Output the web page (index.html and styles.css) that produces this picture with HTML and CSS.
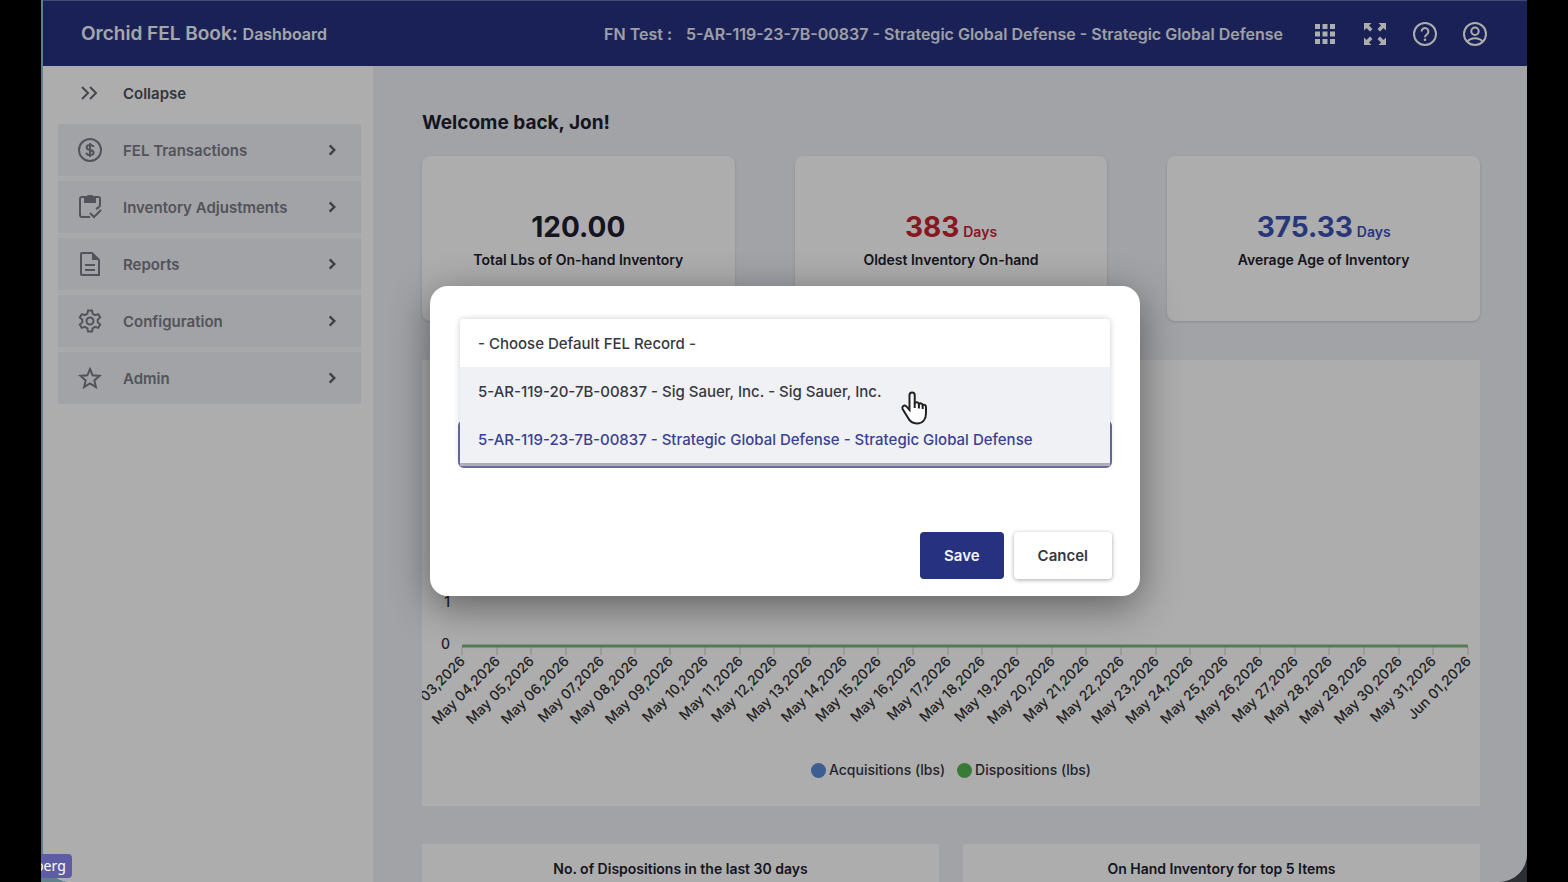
FILE: index.html
```html
<!DOCTYPE html>
<html lang="en">
<head>
    <meta charset="UTF-8">
    <meta name="viewport" content="width=device-width, initial-scale=1.0">
    <title>Orchid FEL Book: Dashboard</title>
    <link rel="stylesheet" href="styles.css">
</head>
<body>

    <div class="desktop">
        <div class="app">
            <header class="topbar">
                <h1 class="brand">Orchid FEL Book: <span>Dashboard</span></h1>
                <div class="account">
                    <span>FN Test :</span>
                    <span>5-AR-119-23-7B-00837 - Strategic Global Defense - Strategic Global Defense</span>
                </div>
                <button class="icon-button" aria-label="Apps">
                    <svg viewBox="0 0 24 24"><path d="M2 2h5v5H2zM9.500 2h5v5h-5zM17 2h5v5h-5zM2 9.500h5v5H2zM9.500 9.500h5v5h-5zM17 9.500h5v5h-5zM2 17h5v5H2zM9.500 17h5v5h-5zM17 17h5v5h-5z"/></svg>
                </button>
                <button class="icon-button" aria-label="Full screen">
                    <svg viewBox="0 0 24 24"><path d="M1 1h7.500L6 3.500l3.500 3.500L7 9.500 3.500 6 1 8.500zM23 1v7.500L20.500 6 17 9.500 14.500 7 18 3.500 15.500 1zM1 23v-7.500L3.500 18 7 14.500 9.500 17 6 20.500 8.500 23zM23 23h-7.500l2.500-2.500-3.500-3.500 2.500-2.500 3.500 3.500 2.500-2.500z"/></svg>
                </button>
                <button class="icon-button" aria-label="Help">
                    <svg viewBox="0 0 24 24"><g fill="none" stroke="currentColor" stroke-width="2"><circle cx="12" cy="12" r="11"/><path d="M8.600 9.500a3.400 3.400 0 1 1 5.700 2.500c-1.300 1.100-2.300 1.600-2.300 3.300"/></g><circle cx="12" cy="17.800" r="1.300"/></svg>
                </button>
                <button class="icon-button" aria-label="Account">
                    <svg viewBox="0 0 24 24"><g fill="none" stroke="currentColor" stroke-width="2"><circle cx="12" cy="12" r="11"/><circle cx="12" cy="9.300" r="3.700"/><path d="M4.500 19.500c1.800-2.200 4.400-3.200 7.500-3.200s5.700 1 7.500 3.200"/></g></svg>
                </button>
            </header>

            <div class="layout">
                <nav class="sidebar">
                    <button class="collapse">
                        <svg class="nav-icon" viewBox="0 0 24 24"><path d="M4 6l6 6-6 6M12 6l6 6-6 6"/></svg>
                        Collapse
                    </button>
                    <div class="nav-list">
                        <a class="nav-item" href="#">
                            <svg class="nav-icon" viewBox="0 0 24 24"><circle cx="12" cy="12" r="11"/><path d="M12 5v14M15.500 9c-.3-1.300-1.600-2-3.500-2s-3.400.8-3.400 2.400c0 3.600 7 1.500 7 5.100 0 1.600-1.500 2.500-3.600 2.500s-3.500-.8-3.800-2.300"/></svg>
                            <span>FEL Transactions</span>
                            <svg class="chevron" viewBox="0 0 12 12"><path d="M4 2l4 4-4 4"/></svg>
                        </a>
                        <a class="nav-item" href="#">
                            <svg class="nav-icon" viewBox="0 0 24 24"><path d="M12 22H4a2 2 0 0 1-2-2V4a2 2 0 0 1 2-2h16a2 2 0 0 1 2 2v6M22 10c0 2-2 3-4 4M12 18l4 4 7-7"/><path class="solid" d="M6 2h3a3 3 0 0 1 6 0h3v6H6z"/></svg>
                            <span>Inventory Adjustments</span>
                            <svg class="chevron" viewBox="0 0 12 12"><path d="M4 2l4 4-4 4"/></svg>
                        </a>
                        <a class="nav-item" href="#">
                            <svg class="nav-icon" viewBox="0 0 24 24"><path d="M4 1h10l7 7v15H4a1 1 0 0 1-1-1V2a1 1 0 0 1 1-1zM7 13h10M7 18h10"/><path class="solid" d="M14 1v7h7z"/></svg>
                            <span>Reports</span>
                            <svg class="chevron" viewBox="0 0 12 12"><path d="M4 2l4 4-4 4"/></svg>
                        </a>
                        <a class="nav-item" href="#">
                            <svg class="nav-icon" viewBox="0 0 24 24"><circle cx="12" cy="12" r="3.500"/><path d="M10 1.500h4l.6 3.200 2.500 1.500 3.100-1.100 2 3.400-2.500 2.100v2.800l2.500 2.100-2 3.400-3.100-1.100-2.500 1.500-.6 3.200h-4l-.6-3.200-2.500-1.500-3.100 1.100-2-3.400 2.500-2.100v-2.800L1.800 8.500l2-3.400 3.100 1.100 2.500-1.500z"/></svg>
                            <span>Configuration</span>
                            <svg class="chevron" viewBox="0 0 12 12"><path d="M4 2l4 4-4 4"/></svg>
                        </a>
                        <a class="nav-item" href="#">
                            <svg class="nav-icon" viewBox="0 0 24 24"><path d="M12 3l2.600 6.300 6.900.6-5.200 4.500 1.600 6.700-5.900-3.600-5.900 3.600 1.600-6.700L2.500 9.900l6.900-.6z"/></svg>
                            <span>Admin</span>
                            <svg class="chevron" viewBox="0 0 12 12"><path d="M4 2l4 4-4 4"/></svg>
                        </a>
                    </div>
                </nav>

                <main class="content">
                    <h2 class="welcome">Welcome back, Jon!</h2>

                    <section class="stats">
                        <div class="card stat">
                            <p class="stat-value">120.00</p>
                            <p class="stat-label">Total Lbs of On-hand Inventory</p>
                        </div>
                        <div class="card stat">
                            <p class="stat-value red">383<small>Days</small></p>
                            <p class="stat-label">Oldest Inventory On-hand</p>
                        </div>
                        <div class="card stat">
                            <p class="stat-value blue">375.33<small>Days</small></p>
                            <p class="stat-label">Average Age of Inventory</p>
                        </div>
                    </section>

                    <section class="chart">
                        <svg class="plot" viewBox="0 0 1058 380">
                            <text x="28" y="247" text-anchor="end">1</text>
                            <text x="28" y="289" text-anchor="end">0</text>
                            <g id="axis"></g>
                            <path class="series" d="M40 286H1046"/>
                        </svg>
                        <div class="legend">
                            <span class="key"><i class="dot dot-blue"></i>Acquisitions (lbs)</span>
                            <span class="key"><i class="dot dot-green"></i>Dispositions (lbs)</span>
                        </div>
                    </section>

                    <section class="panels">
                        <div class="panel">No. of Dispositions in the last 30 days</div>
                        <div class="panel">On Hand Inventory for top 5 Items</div>
                    </section>
                </main>
            </div>

            <div class="overlay">
                <div class="dialog" role="dialog" aria-modal="true" aria-label="Default FEL record">
                    <div class="field">
                        <select class="record" aria-label="Default FEL record">
                            <option>5-AR-119-23-7B-00837 - Strategic Global Defense - Strategic Global Defense</option>
                        </select>
                        <div class="menu">
                            <button class="option">- Choose Default FEL Record -</button>
                            <button class="option hovered">5-AR-119-20-7B-00837 - Sig Sauer, Inc. - Sig Sauer, Inc.</button>
                            <button class="option selected">5-AR-119-23-7B-00837 - Strategic Global Defense - Strategic Global Defense</button>
                            <svg class="pointer" viewBox="0 0 28 36"><path d="M9.500 20V5a2.600 2.600 0 0 1 5.200 0v8.500c.6-2 4-1.800 4.200.8.900-1.600 3.600-1 3.800 1 1.200-1.200 3.300-.4 3.300 1.700v6c0 6.500-3.500 10.500-9 10.500-5 0-7.500-2.500-9.500-6.500L2.600 19c-1-2.400 1.600-4.600 3.500-2.800z"/><path d="M14.700 13v5M18.900 14.500v4M22.700 15.500v3.500"/></svg>
                        </div>
                    </div>
                    <div class="actions">
                        <button class="btn btn-save">Save</button>
                        <button class="btn">Cancel</button>
                    </div>
                </div>
            </div>
        </div>
        <div class="name-tag"><span>berg</span></div>
    </div>

    <script>
        // One tick and one slanted label for each of the 30 days
        var axis = document.getElementById('axis');
        var html = '';
        for (var i = 0; i < 30; i++) {
            var day = i + 3;
            var label = day > 31 ? 'Jun 01,2026' : 'May ' + (day < 10 ? '0' + day : day) + ',2026';
            var x = Math.round(40 + i * 1006 / 29);
            html += '<path class="tick" d="M' + x + ' 287v8"/>';
            html += '<text text-anchor="end" transform="translate(' + (x + 4) + ' 302) rotate(-45)">' + label + '</text>';
        }
        axis.innerHTML = html;
    </script>

</body>
</html>
```
FILE: styles.css
```css
*,
::after,
::before {
    margin: 0;
    padding: 0;
    box-sizing: border-box;
}

body {
    background-color: #000;
    font-family: Inter, "Liberation Sans", sans-serif;
    font-size: 15px;
    color: #1d2130;
}

button {
    font: inherit;
    color: inherit;
    background: none;
    border: none;
    cursor: pointer;
}

.desktop {
    position: relative;
    height: 100vh;
    margin: 0 41px;
    padding-left: 2px;
    background: linear-gradient(90deg, #5f8088, #5f8088 40px, #2c2e33 200px);
    overflow: hidden;
}

.app {
    position: relative;
    display: flex;
    flex-direction: column;
    height: 100%;
    background-color: #eff0f7;
    border-radius: 0 0 28px 28px;
    overflow: hidden;
}

/* top bar */
.topbar {
    display: flex;
    align-items: center;
    flex: 0 0 66px;
    gap: 26px;
    padding: 0 40px 0 38px;
    color: #fff;
    background-color: #26327f;
    border-top: 1px solid #5d6fa8;
}

.brand {
    margin-right: auto;
    font-size: 19px;
    font-weight: 600;
    color: #f4f5fb;
}

.brand span {
    font-size: 16px;
    font-weight: 600;
}

.account {
    display: flex;
    gap: 14px;
    margin-right: 4px;
    font-size: 16px;
    font-weight: 600;
    color: #e8eaf4;
}

.icon-button {
    display: flex;
}

.icon-button svg {
    width: 24px;
    height: 24px;
    fill: currentColor;
}

/* sidebar */
.layout {
    display: flex;
    flex: 1;
    min-height: 0;
}

.sidebar {
    flex: 0 0 330px;
    padding: 0 12px 0 15px;
    background-color: #fff;
}

.collapse {
    display: flex;
    align-items: center;
    gap: 21px;
    height: 54px;
    margin-bottom: 4px;
    padding: 0 20px;
    font-weight: 600;
    color: #4d4f5b;
}

.nav-list {
    display: flex;
    flex-direction: column;
    gap: 5px;
    background-color: #f8f9fc;
}

.nav-item {
    display: flex;
    align-items: center;
    gap: 21px;
    height: 52px;
    padding: 0 22px 0 20px;
    font-weight: 600;
    color: #797b86;
    text-decoration: none;
    background-color: #eff0f5;
}

.nav-item span {
    flex: 1;
}

.nav-icon,
.chevron {
    width: 24px;
    height: 24px;
    fill: none;
    stroke: #797b86;
    stroke-width: 2;
}

.collapse .nav-icon {
    stroke: #666873;
}

.nav-icon .solid {
    fill: #797b86;
    stroke: none;
}

.chevron {
    width: 14px;
    height: 14px;
    stroke: #5c5e68;
}

/* dashboard */
.content {
    flex: 1;
    padding: 44px 47px 0 49px;
    overflow: hidden;
}

.welcome {
    font-size: 19px;
    line-height: 26px;
    font-weight: 700;
}

.stats {
    display: grid;
    grid-template-columns: repeat(3, 1fr);
    gap: 60px;
    margin: 20px 0 39px;
}

.card {
    background-color: #fff;
    border-radius: 8px;
    box-shadow: 0 1px 3px rgba(0, 0, 0, 0.15);
}

.stat {
    height: 165px;
    padding-top: 52px;
    text-align: center;
}

.stat-value {
    height: 38px;
    font-size: 28px;
    line-height: 38px;
    font-weight: 700;
}

.stat-value small {
    margin-left: 4px;
    font-size: 14px;
    line-height: 14px;
    font-weight: 600;
}

.stat-label {
    font-size: 14px;
    line-height: 28px;
    font-weight: 600;
}

.red {
    color: #c9232f;
}

.blue {
    color: #3c50b4;
}

.chart {
    background-color: #fff;
    height: 446px;
}

.plot {
    display: block;
    width: 100%;
    font-size: 14px;
    font-weight: 500;
    fill: #333;
    overflow: hidden;
}

.tick {
    stroke: #ccc;
}

.series {
    stroke: #7cb77c;
    stroke-width: 3;
}

.legend {
    display: flex;
    justify-content: center;
    gap: 12px;
    padding-top: 20px;
    font-size: 14px;
    font-weight: 500;
    line-height: 20px;
    color: #333642;
}

.key {
    display: flex;
    align-items: center;
    gap: 3px;
}

.dot {
    width: 15px;
    height: 15px;
    border-radius: 50%;
}

.dot-blue {
    background-color: #5b8bd6;
}

.dot-green {
    background-color: #52b552;
}

.panels {
    display: grid;
    grid-template-columns: 1fr 1fr;
    gap: 24px;
    margin-top: 38px;
}

.panel {
    height: 300px;
    padding-top: 15px;
    font-size: 14px;
    line-height: 20px;
    font-weight: 600;
    text-align: center;
    background-color: #fff;
}

/* dialog */
.overlay {
    position: absolute;
    inset: 0;
    display: grid;
    place-items: center;
    background-color: rgba(0, 0, 0, 0.32);
}

.dialog {
    width: 710px;
    padding: 134px 28px 17px;
    background-color: #fff;
    border-radius: 18px;
    box-shadow: 0 10px 40px rgba(0, 0, 0, 0.45);
}

.field {
    position: relative;
}

.record {
    display: block;
    width: 100%;
    height: 48px;
    padding: 0 16px;
    font: inherit;
    color: #26327f;
    background-color: #fff;
    border: 2px solid #6a6ea3;
    border-radius: 6px;
}

.menu {
    position: absolute;
    left: 2px;
    right: 2px;
    bottom: 5px;
    display: flex;
    flex-direction: column;
    background-color: #fff;
    border-radius: 4px 4px 0 0;
    box-shadow: 0 0 6px rgba(0, 0, 0, 0.2), 0 3px 0 #b9bac4;
}

.option {
    height: 48px;
    padding: 0 18px;
    font-weight: 500;
    text-align: left;
    color: #363842;
}

.hovered,
.selected {
    background-color: #f0f1f5;
}

.selected {
    color: #3a4192;
}

.pointer {
    position: absolute;
    left: 440px;
    top: 71px;
    width: 28px;
    height: 36px;
    fill: #fff;
    stroke: #222;
    stroke-width: 2;
}

.actions {
    display: flex;
    justify-content: flex-end;
    gap: 10px;
    margin-top: 64px;
}

.btn {
    height: 47px;
    padding: 0 24px;
    font-weight: 600;
    color: #363842;
    background-color: #fff;
    border-radius: 4px;
    box-shadow: 0 1px 4px rgba(0, 0, 0, 0.35);
}

.btn-save {
    color: #f4f5fb;
    background-color: #26327f;
    box-shadow: none;
}

/* participant name over the shared screen */
.name-tag {
    position: absolute;
    left: 0;
    bottom: 4px;
    padding-right: 6px;
    font-family: "Noto Sans", sans-serif;
    font-size: 14px;
    line-height: 24px;
    color: #fff;
    background-color: #5d5ca5;
    border-radius: 0 4px 4px 0;
}

.name-tag span {
    margin-left: -6px;
}
```
